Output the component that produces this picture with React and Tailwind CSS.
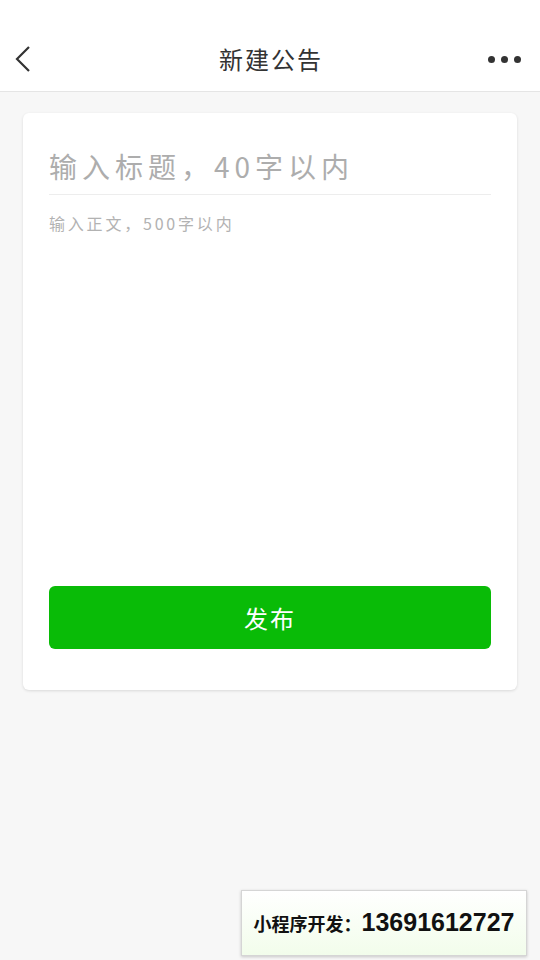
import React, { useState } from "react";

const font = { fontFamily: '"Noto Sans CJK SC", "Noto Sans", sans-serif' };

function App() {
  const [title, setTitle] = useState("");
  const [body, setBody] = useState("");

  return (
    <div className="min-h-[960px] bg-[#f7f7f7] flex flex-col relative" style={font}>
      {/* header */}
      <div className="h-[92px] bg-white border-b border-[#e5e5e5] flex items-end">
        <div className="h-[62px] w-full grid grid-cols-[1fr_auto_1fr] items-center px-[14px] pb-[2px]">
          <svg width="20" height="28" viewBox="0 0 20 28">
            <path d="M15 2 L3 14 L15 26" fill="none" stroke="#333" strokeWidth="2.2" />
          </svg>
          <div className="text-[24px] text-[#333] tracking-[2px] pl-[2px]">新建公告</div>
          <div className="flex gap-[6px] mr-[5px] justify-end">
            <span className="w-[7px] h-[7px] rounded-full bg-[#333]"></span>
            <span className="w-[7px] h-[7px] rounded-full bg-[#333]"></span>
            <span className="w-[7px] h-[7px] rounded-full bg-[#333]"></span>
          </div>
        </div>
      </div>

      {/* card */}
      <div className="mx-[23px] mt-[21px] bg-white rounded-[6px] shadow-[0_1px_3px_rgba(0,0,0,0.12)] px-[26px] pt-[30px] pb-[41px] flex flex-col">
        <input
          value={title}
          onChange={(e) => setTitle(e.target.value)}
          placeholder="输入标题，40字以内"
          className="h-[52px] text-[28px] tracking-[5px] text-[#333] placeholder-[#adadad] outline-none border-b border-[#ededed] pb-[6px]"
          style={font}
        />
        <textarea
          value={body}
          onChange={(e) => setBody(e.target.value)}
          placeholder="输入正文，500字以内"
          className="mt-[16px] h-[375px] resize-none text-[16px] tracking-[2.8px] text-[#333] placeholder-[#b2b2b2] outline-none"
          style={font}
        />
        <button className="h-[63px] bg-[#09bb07] rounded-[6px] text-white text-[24px] tracking-[2px]" style={font}>
          发布
        </button>
      </div>

      {/* watermark */}
      <div className="absolute right-[13px] bottom-[4px] w-[286px] h-[66px] border border-[#d5d5d5] bg-gradient-to-b from-white to-[#f2fdeb] shadow-[0_1px_3px_rgba(0,0,0,0.2)] flex items-center justify-center">
        <span className="text-[18px] font-bold text-[#111]">小程序开发：</span>
        <span className="text-[25px] font-bold text-[#111]" style={{ fontFamily: '"Liberation Sans", Arial, sans-serif' }}>13691612727</span>
      </div>
    </div>
  );
}

export default App;
